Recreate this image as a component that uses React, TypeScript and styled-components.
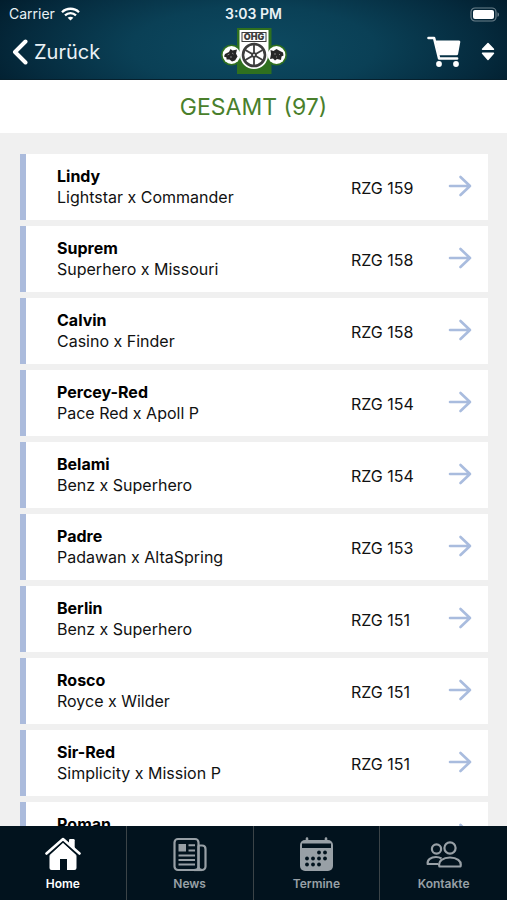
import React from 'react';
import styled, { createGlobalStyle } from 'styled-components';

const GlobalStyle = createGlobalStyle`
  *, *::before, *::after { box-sizing: border-box; }
  html, body, #root { height: 100%; }
  body {
    margin: 0;
    font-family: Inter, "Liberation Sans", sans-serif;
    color: #111;
    background: #f0f0f0;
  }
  button { font: inherit; border: 0; padding: 0; background: none; color: inherit; cursor: pointer; }
  svg { display: block; }
`;

const Screen = styled.div`
  display: flex;
  flex-direction: column;
  height: 100vh;
`;

const Header = styled.header`
  flex: none;
  color: #e9f1f5;
  background: radial-gradient(ellipse 60% 130% at 50% 60%, #0d4a61 0%, #0a4056 40%, #052b3e 75%, #011a29 100%);
  border-bottom: 1px solid #06202d;
`;

const StatusBar = styled.div`
  display: grid;
  grid-template-columns: 1fr auto 1fr;
  align-items: center;
  height: 26px;
  padding: 2px 7px 0;
  font-size: 14px;
  line-height: 20px;
`;

const Carrier = styled.span`
  display: flex;
  align-items: center;
  gap: 6px;
  padding-left: 2px;
`;

const Clock = styled.span`
  font-weight: 600;
`;

const Battery = styled.span`
  justify-self: end;
`;

const NavBar = styled.div`
  display: grid;
  grid-template-columns: 1fr auto 1fr;
  align-items: center;
  height: 53px;
  padding: 0 12px 2px;
`;

const BackButton = styled.button`
  && {
    display: flex;
    align-items: center;
    justify-self: start;
    gap: 6px;
    font-size: 20px;
    line-height: 28px;
  }
`;

const NavActions = styled.div`
  display: flex;
  align-items: center;
  justify-content: flex-end;
  gap: 20px;
`;

const PageTitle = styled.h1`
  flex: none;
  margin: 0;
  padding: 11px 0 10px;
  background: #fff;
  color: #4a7f2c;
  font-size: 23px;
  line-height: 32px;
  font-weight: 400;
  text-align: center;
`;

const List = styled.ul`
  flex: 1;
  min-height: 0;
  overflow: hidden auto;
  scrollbar-width: none;
  margin: 0;
  padding: 21px 19px 0 20px;
  list-style: none;
  display: flex;
  flex-direction: column;
  gap: 6px;
`;

const Entry = styled.li`
  flex: none;
`;

const Card = styled.button`
  && {
    display: flex;
    align-items: center;
    width: 100%;
    height: 66px;
    padding: 0 16px 0 31px;
    background: #fff;
    border-left: 6px solid #abbbdc;
    text-align: left;
    font-size: 16px;
    line-height: 21px;
  }
  svg { margin-bottom: 2px; }
`;

const Names = styled.span`
  flex: 1;
  display: flex;
  flex-direction: column;
`;

const Name = styled.strong`
  color: #000;
  font-weight: 700;
`;

const Score = styled.span`
  width: 97px;
  padding-top: 3px;
`;

const TabBar = styled.nav`
  flex: none;
  display: grid;
  grid-template-columns: repeat(4, 1fr);
  height: 74px;
  background: #02131e;
`;

const Tab = styled.button<{ $active?: boolean }>`
  && {
    display: flex;
    flex-direction: column;
    align-items: center;
    padding-top: 11px;
    gap: 3px;
    color: ${(p) => (p.$active ? '#fff' : '#98a0a6')};
    font-size: 12px;
    line-height: 16px;
    font-weight: 600;
  }
  &&:not(:last-child) { border-right: 1px solid #3b4448; }
`;

const WifiIcon = () => (
  <svg width="19" height="14" viewBox="0 0 19 14" fill="none" stroke="#fff" strokeWidth="2.3" aria-hidden="true">
    <path d="M1 5.2C5.7.6 13.3.6 18 5.2" />
    <path d="M4 8.4c3.2-3 7.8-3 11 0" />
    <path d="M6.6 10.8c1.700-1.500 4.100-1.500 5.800 0L9.500 13.600z" fill="#fff" stroke="none" />
  </svg>
);

const BatteryIcon = () => (
  <svg width="30" height="15" viewBox="0 0 30 15" role="img" aria-label="Akku voll">
    <rect x="1" y="1" width="25" height="13" rx="4" fill="none" stroke="#6d818c" strokeWidth="1.2" />
    <rect x="3" y="3" width="21" height="9" rx="2" fill="#fff" />
    <path d="M27.500 5.200c2 .8 2 3.800 0 4.600z" fill="#6d818c" />
  </svg>
);

const BackIcon = () => (
  <svg width="16" height="26" viewBox="0 0 16 26" fill="none" stroke="#fff" strokeWidth="4" strokeLinecap="round" strokeLinejoin="round" aria-hidden="true">
    <path d="M13.500 2.500 3 13l10.500 10.500" />
  </svg>
);

const CartIcon = () => (
  <svg width="34" height="31" viewBox="0 0 34 31" aria-hidden="true">
    <path d="M1.500 2h5.600l5 20.500h18" fill="none" stroke="#fff" strokeWidth="2.600" strokeLinecap="round" strokeLinejoin="round" />
    <path d="M8.500 4.500H32q1.500 0 1.300 1.500l-2.200 12q-.2 1.300-1.600 1.300H12z" fill="#fff" />
    <circle cx="12" cy="28" r="2.900" fill="#fff" />
    <circle cx="29" cy="28" r="2.900" fill="#fff" />
  </svg>
);

const SortIcon = () => (
  <svg width="14" height="19" viewBox="0 0 14 19" fill="#fff" stroke="#fff" strokeWidth="1.400" strokeLinejoin="round" aria-hidden="true">
    <path d="M7 1.500 12.500 7.300h-11z" />
    <path d="M7 17.500 12.500 11.200h-11z" />
  </svg>
);

const spokes = [0, 60, 120];

const Logo = () => (
  <svg width="68" height="48" viewBox="0 0 68 48" role="img" aria-label="OHG">
    <rect x="17" y="0" width="34.500" height="46" fill="#2f701f" />
    <circle cx="11.500" cy="27" r="10.500" fill="#2f701f" />
    <circle cx="56.500" cy="27" r="10.500" fill="#2f701f" />
    <path d="M19.500 2h29v24h-29z" fill="#fff" />
    <circle cx="34" cy="27" r="14" fill="#fff" />
    <circle cx="11.500" cy="27" r="8.900" fill="#fff" />
    <circle cx="56.500" cy="27" r="8.900" fill="#fff" />
    <rect x="21.500" y="4" width="25" height="10" fill="#3d3d3d" />
    <rect x="22.500" y="5" width="23" height="8" fill="#fff" />
    <text x="34" y="12.400" textAnchor="middle" fontFamily="Inter, sans-serif" fontSize="9" fontWeight="900" fill="#3d3d3d">OHG</text>
    <circle cx="34" cy="27" r="11" fill="none" stroke="#3d3d3d" strokeWidth="2.600" />
    {spokes.map((angle) => (
      <path key={angle} d="M34 17v20" stroke="#3d3d3d" strokeWidth="1.800" transform={`rotate(${angle} 34 27)`} />
    ))}
    <circle cx="34" cy="27" r="2.800" fill="#3d3d3d" />
    <circle cx="34" cy="27" r="1" fill="#fff" />
    <path d="m5 26 4-2 1.500-3 2 1.500 4.500-1-1 4 1.500 3-2.500 4-3 1-2.500-2-3 0 0-2-2.500-1z" fill="#262626" />
    <path d="m7.500 27 2-1M12 25l1.500 1M10 29h2" stroke="#999" strokeWidth=".8" />
    <path d="m50.500 22 3 1 3-2 2.500 1.500 4 2 .5 3-2 1-.5 3.500-4-1-2 1.500-2-2-3 .5 1-5z" fill="#262626" />
    <path d="M54 26h2M59 26l1 1M56 29h1" stroke="#999" strokeWidth=".8" />
  </svg>
);

const ArrowIcon = () => (
  <svg width="24" height="22" viewBox="0 0 24 22" fill="none" stroke="#a9bcde" strokeWidth="2.600" strokeLinecap="round" strokeLinejoin="round" aria-hidden="true">
    <path d="M2 11h20M12.500 2 22 11l-9.500 9" />
  </svg>
);

const HomeIcon = () => (
  <svg width="36" height="36" viewBox="0 0 36 36" aria-hidden="true">
    <path d="M18 7.500 31.500 19v12q0 2-2 2H22V22h-7v11H6.500q-2 0-2-2V19z" fill="#fff" />
    <path d="M18 5.500 32 18.500H4z" fill="#fff" />
    <path d="M2 17 18 2.500 34 17" fill="none" stroke="#02131e" strokeWidth="5" strokeLinecap="round" strokeLinejoin="round" />
    <path d="M24 3.200q0-1.200 1.200-1.200h3.300q1.200 0 1.200 1.200V12L24 7z" fill="#fff" />
    <path d="M1.500 16.500 18 2l16.500 14.500" fill="none" stroke="#fff" strokeWidth="2.600" strokeLinecap="round" strokeLinejoin="round" />
    <path d="M5 18.500 18 7l13 11.500z" fill="#fff" />
  </svg>
);

const NewsIcon = () => (
  <svg width="36" height="36" viewBox="0 0 36 36" fill="none" stroke="currentColor" strokeWidth="2.200" aria-hidden="true">
    <rect x="2.500" y="2" width="24" height="31" rx="3.500" />
    <path d="M26.500 8.500H30q3.500 0 3.500 3.500v17.500a3.500 3.500 0 0 1-7 0V8.500" />
    <path d="M22 33h8" />
    <rect x="6.500" y="7" width="7.500" height="7.500" fill="currentColor" stroke="none" />
    <path d="M16.500 8.300H23M16.500 13.500H23M6.500 18.500H23M6.500 23H23M6.500 27.500H23" strokeWidth="2" />
  </svg>
);

const calendarDays = [
  [21, 15.500], [27, 15.500],
  [9, 21.500], [15, 21.500], [21, 21.500], [27, 21.500],
  [9, 27.500], [15, 27.500], [21, 27.500],
];

const CalendarIcon = () => (
  <svg width="36" height="36" viewBox="0 0 36 36" aria-hidden="true">
    <path d="M9 1.500v4M28 1.500v4" stroke="currentColor" strokeWidth="2.600" strokeLinecap="round" />
    <rect x="2" y="3" width="33" height="31" rx="5" fill="currentColor" />
    <path d="M4 6.500h29v4.500H4z" fill="#02131e" />
    {calendarDays.map(([x, y]) => (
      <circle key={`${x}-${y}`} cx={x} cy={y} r="1.900" fill="#02131e" />
    ))}
  </svg>
);

const ContactsIcon = () => (
  <svg width="36" height="36" viewBox="0 0 36 36" fill="none" stroke="currentColor" strokeWidth="2.200" strokeLinejoin="round" aria-hidden="true">
    <circle cx="10.500" cy="12" r="4.600" />
    <circle cx="24" cy="11" r="5.600" />
    <path d="M13.500 29.500C11.500 24 17.500 20.500 24 20.500s12 3.500 10.500 9z" />
    <path d="M12 27H1.700C1 22.500 5 20 10 20q3 0 5.500 1.500" />
  </svg>
);

const bulls = [
  { name: 'Lindy', parents: 'Lightstar x Commander', score: 159 },
  { name: 'Suprem', parents: 'Superhero x Missouri', score: 158 },
  { name: 'Calvin', parents: 'Casino x Finder', score: 158 },
  { name: 'Percey-Red', parents: 'Pace Red x Apoll P', score: 154 },
  { name: 'Belami', parents: 'Benz x Superhero', score: 154 },
  { name: 'Padre', parents: 'Padawan x AltaSpring', score: 153 },
  { name: 'Berlin', parents: 'Benz x Superhero', score: 151 },
  { name: 'Rosco', parents: 'Royce x Wilder', score: 151 },
  { name: 'Sir-Red', parents: 'Simplicity x Mission P', score: 151 },
  { name: 'Roman', parents: '', score: 0 },
];

const tabs = [
  { label: 'Home', Icon: HomeIcon },
  { label: 'News', Icon: NewsIcon },
  { label: 'Termine', Icon: CalendarIcon },
  { label: 'Kontakte', Icon: ContactsIcon },
];

export default function App() {
  return (
    <Screen>
      <GlobalStyle />
      <Header>
        <StatusBar>
          <Carrier>Carrier <WifiIcon /></Carrier>
          <Clock>3:03 PM</Clock>
          <Battery><BatteryIcon /></Battery>
        </StatusBar>
        <NavBar>
          <BackButton type="button"><BackIcon />Zurück</BackButton>
          <Logo />
          <NavActions>
            <button type="button" aria-label="Warenkorb"><CartIcon /></button>
            <button type="button" aria-label="Sortieren"><SortIcon /></button>
          </NavActions>
        </NavBar>
      </Header>
      <PageTitle>GESAMT (97)</PageTitle>
      <List>
        {bulls.map((bull) => (
          <Entry key={bull.name}>
            <Card type="button">
              <Names>
                <Name>{bull.name}</Name>
                <span>{bull.parents || '\u00a0'}</span>
              </Names>
              <Score>{bull.score > 0 && `RZG ${bull.score}`}</Score>
              <ArrowIcon />
            </Card>
          </Entry>
        ))}
      </List>
      <TabBar>
        {tabs.map(({ label, Icon }, index) => (
          <Tab key={label} type="button" $active={index === 0} aria-current={index === 0 ? 'page' : undefined}>
            <Icon />
            {label}
          </Tab>
        ))}
      </TabBar>
    </Screen>
  );
}
